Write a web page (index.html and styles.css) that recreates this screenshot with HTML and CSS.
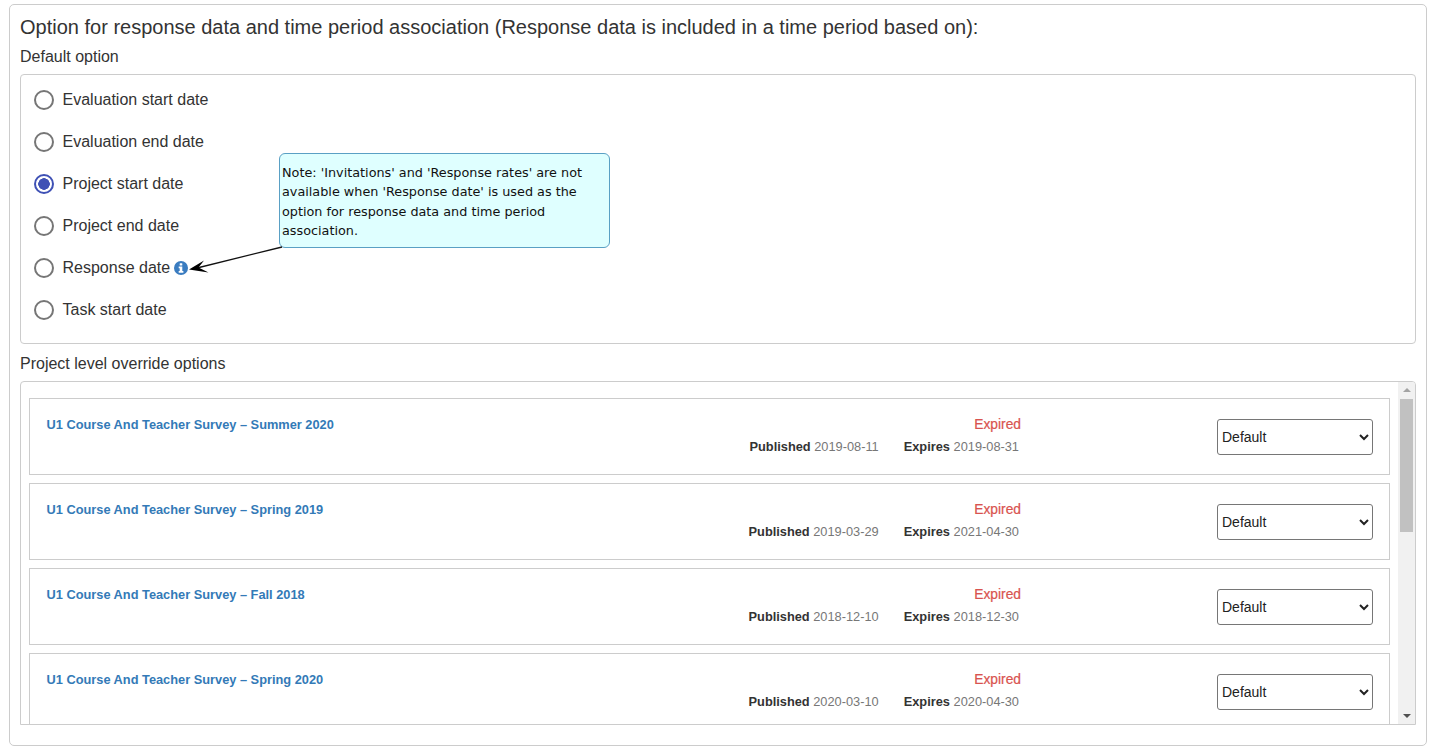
FILE: index.html
```html
<!DOCTYPE html>
<html lang="en">
<head>
<meta charset="utf-8">
<title>Response data option</title>
<link rel="stylesheet" href="styles.css">
</head>
<body>
<main class="panel">
  <h1 class="heading">Option for response data and time period association (Response data is included in a time period based on):</h1>
  <div class="label">Default option</div>
  <div class="options">
    <label class="option"><input type="radio" name="opt"><span>Evaluation start date</span></label>
    <label class="option"><input type="radio" name="opt"><span>Evaluation end date</span></label>
    <label class="option"><input type="radio" name="opt" checked><span>Project start date</span></label>
    <label class="option"><input type="radio" name="opt"><span>Project end date</span></label>
    <label class="option"><input type="radio" name="opt"><span>Response date</span>
      <svg class="info" viewBox="0 0 14 14" width="14" height="14" aria-hidden="true"><circle cx="7" cy="7" r="7" fill="#3a7cc0"/><rect x="5.700" y="2.200" width="2.600" height="2.300" rx=".5" fill="#fff"/><path d="M4.700 5.600h3.600v4.500h1.100v1.600H4.700v-1.600h1V7.200h-1z" fill="#fff"/></svg>
    </label>
    <label class="option"><input type="radio" name="opt"><span>Task start date</span></label>
    <div class="note">Note: 'Invitations' and 'Response rates' are not available when 'Response date' is used as the option for response data and time period association.</div>
    <svg class="arrow" width="100" height="32" viewBox="0 0 100 32" aria-hidden="true"><path d="M94 2 9 23" stroke="#111" stroke-width="1.300" fill="none"/><path d="M1 24.500 16 15.500 10.500 22.500 20.500 27.500z" fill="#000"/></svg>
  </div>
  <div class="label label-override">Project level override options</div>
  <div class="list-box">
    <div class="list">
      <article class="row">
        <a class="row-title">U1 Course And Teacher Survey – Summer 2020</a>
        <div class="meta"><div class="expired">Expired</div><div class="dates"><b>Published</b> <span>2019-08-11</span><b class="exp">Expires</b> <span>2019-08-31</span></div></div>
        <select class="pick"><option>Default</option></select>
      </article>
      <article class="row">
        <a class="row-title">U1 Course And Teacher Survey – Spring 2019</a>
        <div class="meta"><div class="expired">Expired</div><div class="dates"><b>Published</b> <span>2019-03-29</span><b class="exp">Expires</b> <span>2021-04-30</span></div></div>
        <select class="pick"><option>Default</option></select>
      </article>
      <article class="row">
        <a class="row-title">U1 Course And Teacher Survey – Fall 2018</a>
        <div class="meta"><div class="expired">Expired</div><div class="dates"><b>Published</b> <span>2018-12-10</span><b class="exp">Expires</b> <span>2018-12-30</span></div></div>
        <select class="pick"><option>Default</option></select>
      </article>
      <article class="row">
        <a class="row-title">U1 Course And Teacher Survey – Spring 2020</a>
        <div class="meta"><div class="expired">Expired</div><div class="dates"><b>Published</b> <span>2020-03-10</span><b class="exp">Expires</b> <span>2020-04-30</span></div></div>
        <select class="pick"><option>Default</option></select>
      </article>
    </div>
    <div class="scrollbar" aria-hidden="true">
      <div class="tri tri-up"></div>
      <div class="track"><div class="thumb"></div></div>
      <div class="tri tri-down"></div>
    </div>
  </div>
</main>
</body>
</html>
```
FILE: styles.css
```css
html, body {
  margin: 0;
  height: 100%;
  overflow: hidden;
  background: #fff;
}
body {
  font-family: "Liberation Sans", Arial, sans-serif;
  color: #333;
  font-size: 16px;
}
.panel {
  box-sizing: border-box;
  height: 742px;
  margin: 4px 11px 0 9px;
  padding: 10px 10px 20px 10px;
  border: 1px solid #ccc;
  border-radius: 5px;
}
.heading {
  margin: 0;
  font-size: 20px;
  font-weight: 400;
  line-height: 24px;
}
.label {
  margin-top: 8px;
  line-height: 20px;
}
.options {
  position: relative;
  box-sizing: border-box;
  height: 270px;
  margin-top: 7px;
  padding: 4px 13px;
  border: 1px solid #ccc;
  border-radius: 4px;
}
.option {
  display: flex;
  align-items: center;
  height: 42px;
}
.option input {
  appearance: none;
  box-sizing: border-box;
  width: 20px;
  height: 20px;
  margin: 0 8.500px 0 0;
  background: #fff;
  border: 2px solid #767676;
  border-radius: 50%;
}
.option input:checked {
  border-color: #3f51b5;
  background: radial-gradient(circle, #3f51b5 0 5.500px, #fff 6px);
}
.info {
  margin-left: 4px;
}
.note {
  position: absolute;
  left: 258px;
  top: 78px;
  box-sizing: border-box;
  width: 331px;
  height: 95px;
  padding: 9px 2px;
  background: #dfffff;
  border: 1px solid #5aa0c4;
  border-radius: 6px;
  font-family: "DejaVu Sans", sans-serif;
  font-size: 12.800px;
  line-height: 19.300px;
  color: #111;
}
.arrow {
  position: absolute;
  left: 167px;
  top: 170px;
}
.label-override {
  margin-top: 10px;
}
.list-box {
  display: flex;
  box-sizing: border-box;
  height: 344px;
  margin-top: 7px;
  border: 1px solid #ccc;
  border-radius: 4px 4px 0 0;
  overflow: hidden;
}
.list {
  flex: 1;
  min-width: 0;
  padding: 16px 8px 0 8px;
}
.row {
  display: flex;
  box-sizing: border-box;
  height: 77px;
  margin-bottom: 8px;
  padding: 16px 16px 0 16.500px;
  border: 1px solid #ccc;
  font-size: 12.800px;
  line-height: 20px;
}
.row-title {
  flex: 1;
  font-weight: 700;
  color: #337ab7;
}
.meta {
  margin-right: 196px;
  text-align: right;
}
.expired {
  font-size: 13.800px;
  line-height: 20px;
  color: #d9534f;
  -webkit-text-stroke: .2px #d9534f;
}
.dates {
  margin-top: 2px;
  padding-right: 2px;
  color: #777;
}
.dates b {
  color: #333;
}
.dates .exp {
  margin-left: 25px;
}
.pick {
  box-sizing: border-box;
  width: 156px;
  height: 36px;
  margin-top: 4px;
  padding: 0;
  font-family: "Liberation Sans", Arial, sans-serif;
  font-size: 14px;
  color: #222;
  background: #fff;
  border: 1px solid #767676;
  border-radius: 3px;
}
.scrollbar {
  display: flex;
  flex-direction: column;
  align-items: center;
  width: 17px;
  background: #f1f1f1;
}
.tri {
  flex: none;
  width: 0;
  height: 0;
  border-left: 4px solid transparent;
  border-right: 4px solid transparent;
}
.tri-up {
  margin: 6px 0 7px;
  border-bottom: 4px solid #a3a3a3;
}
.tri-down {
  margin: 4px 0 6px;
  border-top: 4px solid #505050;
}
.track {
  flex: 1;
  width: 100%;
  display: flex;
  justify-content: center;
}
.thumb {
  width: 13px;
  height: 133px;
  background: #c1c1c1;
}
```
